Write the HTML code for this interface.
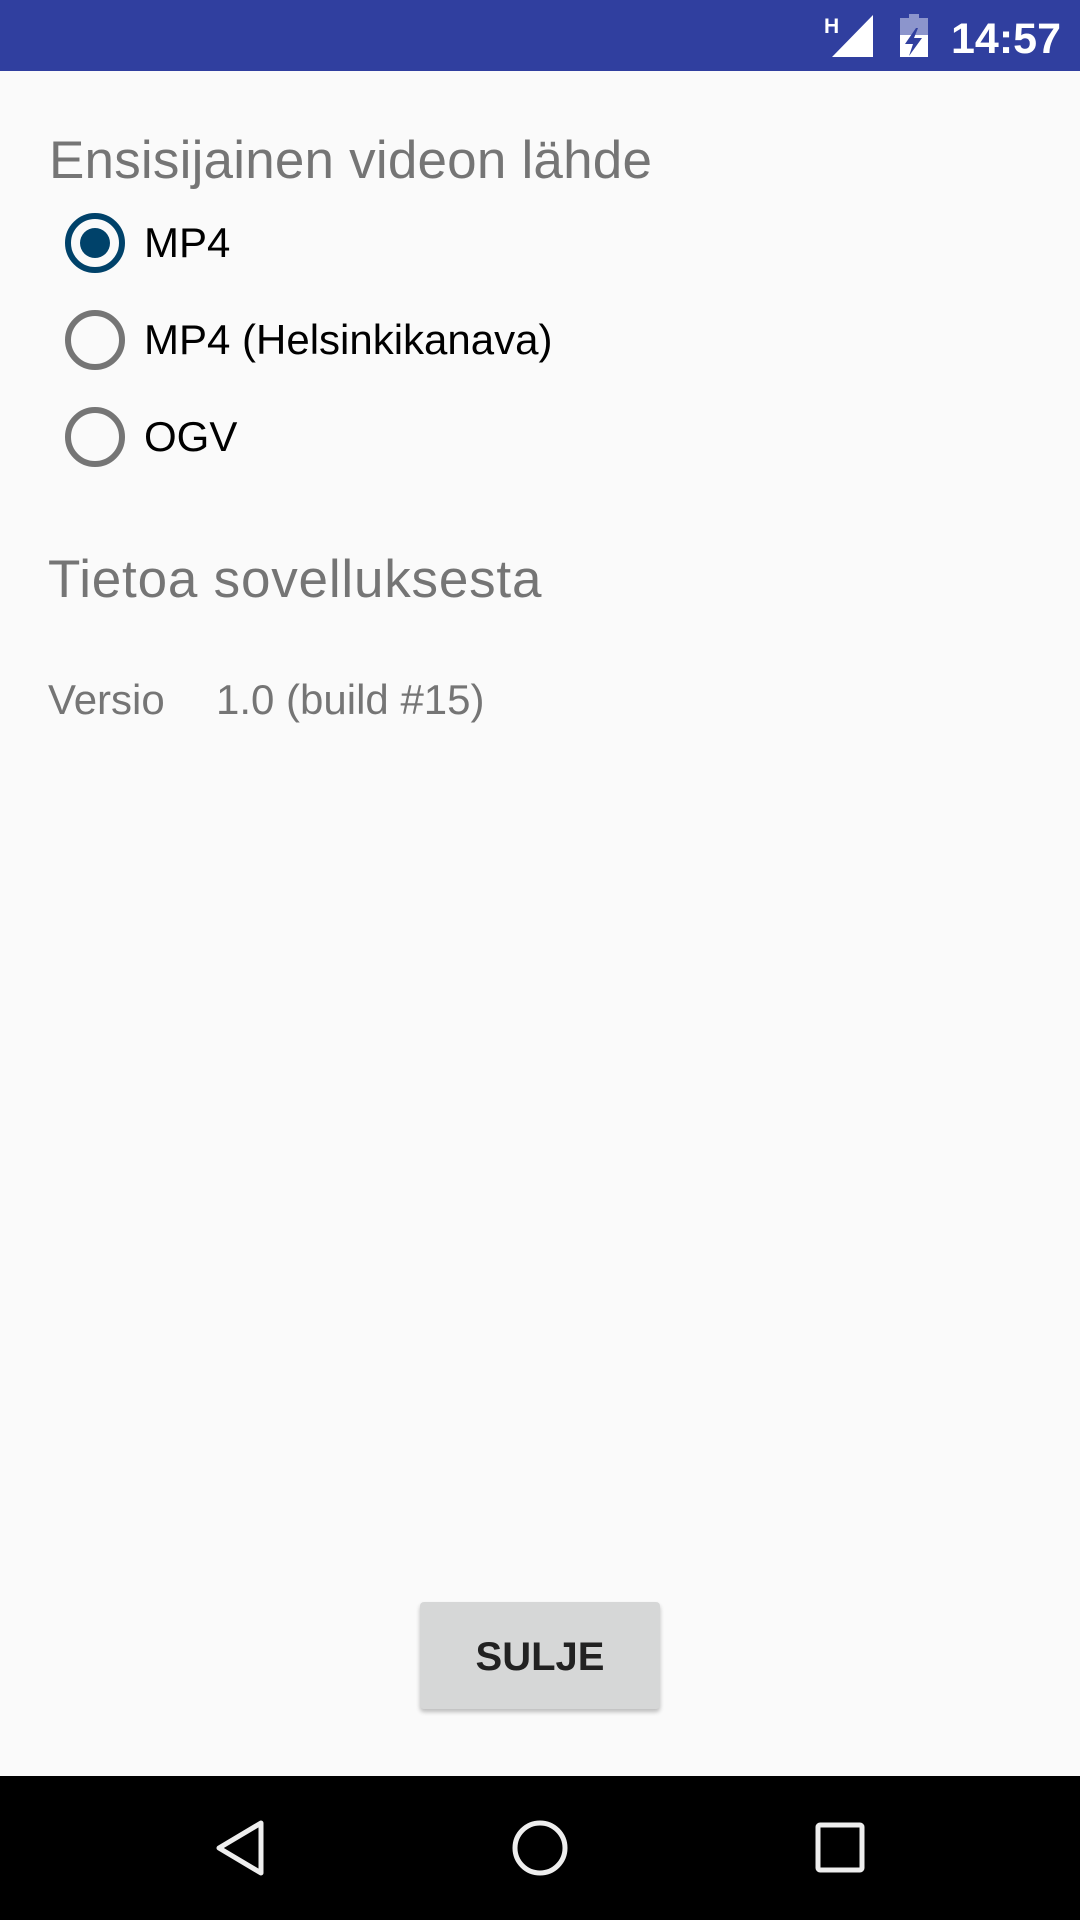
<!DOCTYPE html>
<html><head><meta charset="utf-8"><style>
html,body{margin:0;padding:0}
body{width:1080px;height:1920px;position:relative;background:#FAFAFA;font-family:"Liberation Sans",sans-serif;overflow:hidden}
.a{position:absolute;white-space:nowrap;line-height:1}
.sb{position:absolute;left:0;top:0;width:1080px;height:71px;background:#303F9F}
.nav{position:absolute;left:0;top:1776px;width:1080px;height:144px;background:#000}
.h{color:#757575;font-size:53px;letter-spacing:0.2px}
.r{color:#000;font-size:42px}
.rad{position:absolute;left:65px;width:48px;height:48px;border-radius:50%;border:6px solid #757575}
.rad.on{border-color:#00426A}
.rad.on:after{content:"";position:absolute;left:9px;top:9px;width:30px;height:30px;border-radius:50%;background:#00426A}
.btn{position:absolute;left:420px;top:1602px;width:240px;height:107px;background:#D6D7D7;border-radius:4px;box-shadow:0 3px 4px rgba(0,0,0,0.25)}
</style></head><body>
<div class="sb">
<svg width="1080" height="71" style="position:absolute;left:0;top:0">
<text x="824" y="33" fill="#fff" font-family="Liberation Sans" font-weight="bold" font-size="21">H</text>
<polygon points="832,57 873,15 873,57" fill="#fff"/>
<rect x="909" y="14" width="10" height="5" fill="#8C95CC"/>
<rect x="900" y="18" width="28" height="39" fill="#8C95CC"/>
<rect x="900" y="35" width="28" height="22" fill="#fff"/>
<polygon points="916,28 905,44 913,44 909,56 922,38 914,38 918,28" fill="#303F9F"/>
</svg>
<div class="a" style="left:951px;top:18px;color:#fff;font-size:43px;font-weight:bold">14:57</div>
</div>
<div class="a h" style="left:49px;top:134px">Ensisijainen videon lähde</div>
<div class="rad on" style="top:213px"></div>
<div class="a r" style="left:144px;top:222px">MP4</div>
<div class="rad" style="top:310px"></div>
<div class="a r" style="left:144px;top:319px">MP4 (Helsinkikanava)</div>
<div class="rad" style="top:407px"></div>
<div class="a r" style="left:144px;top:416px">OGV</div>
<div class="a h" style="left:48px;top:553px;letter-spacing:0.8px">Tietoa sovelluksesta</div>
<div class="a" style="left:48px;top:679px;color:#757575;font-size:42px">Versio</div>
<div class="a" style="left:216px;top:679px;color:#757575;font-size:42px">1.0 (build #15)</div>
<div class="btn"><div class="a" style="left:0;width:240px;text-align:center;top:35px;font-size:40px;font-weight:bold;color:#222">SULJE</div></div>
<div class="nav">
<svg width="1080" height="144" style="position:absolute;left:0;top:0">
<polygon points="261,47 261,97 219,72" fill="none" stroke="#eee" stroke-width="5" stroke-linejoin="round"/>
<ellipse cx="540" cy="72" rx="25" ry="25" fill="none" stroke="#eee" stroke-width="5"/>
<rect x="818" y="49" width="44" height="45" rx="2" fill="none" stroke="#eee" stroke-width="5"/>
</svg>
</div>
</body></html>
